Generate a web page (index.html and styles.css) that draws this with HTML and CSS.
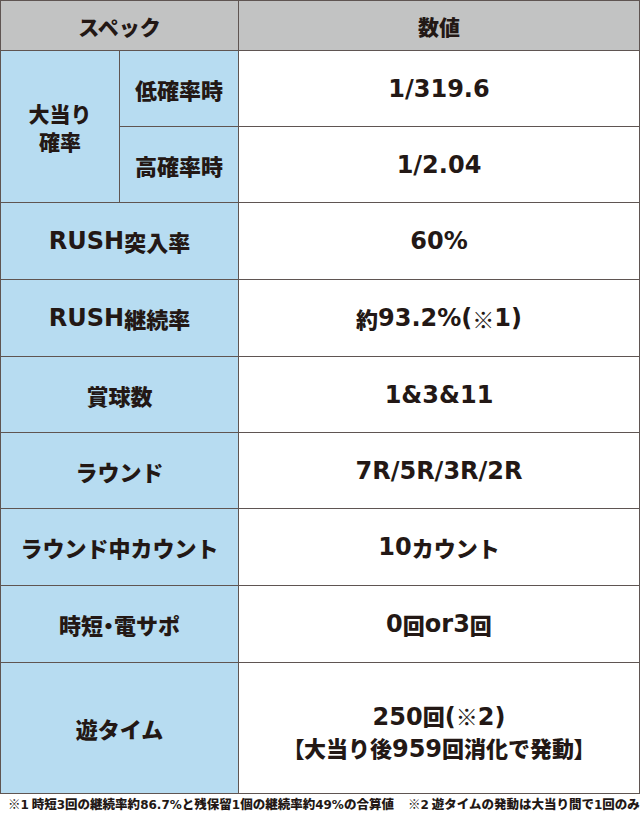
FILE: index.html
```html
<!DOCTYPE html>
<html lang="ja">
<head>
<meta charset="utf-8">
<title>スペック</title>
<link rel="stylesheet" href="styles.css">
</head>
<body>
<div class="spec">
  <div class="cell head span2">スペック</div>
  <div class="cell head">数値</div>

  <div class="cell label rows2"><span>大当り<br>確率</span></div>
  <div class="cell label">低確率時</div>
  <div class="cell value"><span class="n">1/319.6</span></div>
  <div class="cell label">高確率時</div>
  <div class="cell value"><span class="n">1/2.04</span></div>

  <div class="cell label span2"><span class="n">RUSH</span>突入率</div>
  <div class="cell value"><span class="n">60%</span></div>

  <div class="cell label span2"><span class="n">RUSH</span>継続率</div>
  <div class="cell value">約<span class="n">93.2%(</span>※<span class="n">1)</span></div>

  <div class="cell label span2">賞球数</div>
  <div class="cell value"><span class="n">1&amp;3&amp;11</span></div>

  <div class="cell label span2">ラウンド</div>
  <div class="cell value"><span class="n">7R/5R/3R/2R</span></div>

  <div class="cell label span2">ラウンド中カウント</div>
  <div class="cell value"><span class="n">10</span>カウント</div>

  <div class="cell label span2">時短<span class="p">・</span>電サポ</div>
  <div class="cell value"><span class="n">0</span>回<span class="n">or3</span>回</div>

  <div class="cell label span2">遊タイム</div>
  <div class="cell value two">
    <div class="line"><span class="n">250</span>回<span class="n">(</span>※<span class="n">2)</span></div>
    <div class="line"><span class="p">【</span>大当り後<span class="n">959</span>回消化で発動<span class="p">】</span></div>
  </div>
</div>
<p class="note">※<span class="fn">1</span> 時短<span class="fn">3</span>回の継続率約<span class="fn">86.7%</span>と残保留<span class="fn">1</span>個の継続率約<span class="fn">49%</span>の合算値<span class="gap"></span>※<span class="fn">2</span> 遊タイムの発動は大当り間で<span class="fn">1</span>回のみ</p>
</body>
</html>
```

FILE: styles.css
```css
html, body {
  margin: 0;
  padding: 0;
  background: #ffffff;
}

body {
  width: 640px;
  height: 816px;
  overflow: hidden;
  color: #231815;
  font-family: "Noto Sans CJK JP", "DejaVu Sans", sans-serif;
  font-weight: 900;
}

.spec {
  display: grid;
  grid-template-columns: 118px 118px 400px;
  grid-template-rows: 49px 75px 75px 76px 76px 75px 75px 76px 76px 130px;
  gap: 1px;
  padding: 1px;
  background: #5f5552;
  width: 638px;
}

.cell {
  display: flex;
  align-items: center;
  justify-content: center;
  text-align: center;
  font-size: 22px;
  line-height: 28px;
  white-space: nowrap;
}

.head {
  background: #c2c3c3;
  font-size: 21px;
}

.label {
  background: #b7dcf1;
}

.value {
  background: #ffffff;
}

.span2 {
  grid-column: span 2;
}

.rows2 {
  grid-row: span 2;
  font-size: 21px;
}

.n {
  font-family: "DejaVu Sans", "Noto Sans CJK JP", sans-serif;
  font-size: 24px;
  font-weight: 700;
}

.p {
  font-feature-settings: "palt";
}

.two {
  flex-direction: column;
  padding-top: 8px;
  box-sizing: border-box;
}

.line {
  line-height: 30px;
}

.note {
  margin: 0;
  padding: 1px 0 0 8px;
  font-size: 12.5px;
  line-height: 18px;
  white-space: nowrap;
  font-weight: 900;
}

.fn {
  font-family: "DejaVu Sans", "Noto Sans CJK JP", sans-serif;
  font-size: 12px;
  font-weight: 700;
}

.gap {
  display: inline-block;
  width: 14px;
}
```
